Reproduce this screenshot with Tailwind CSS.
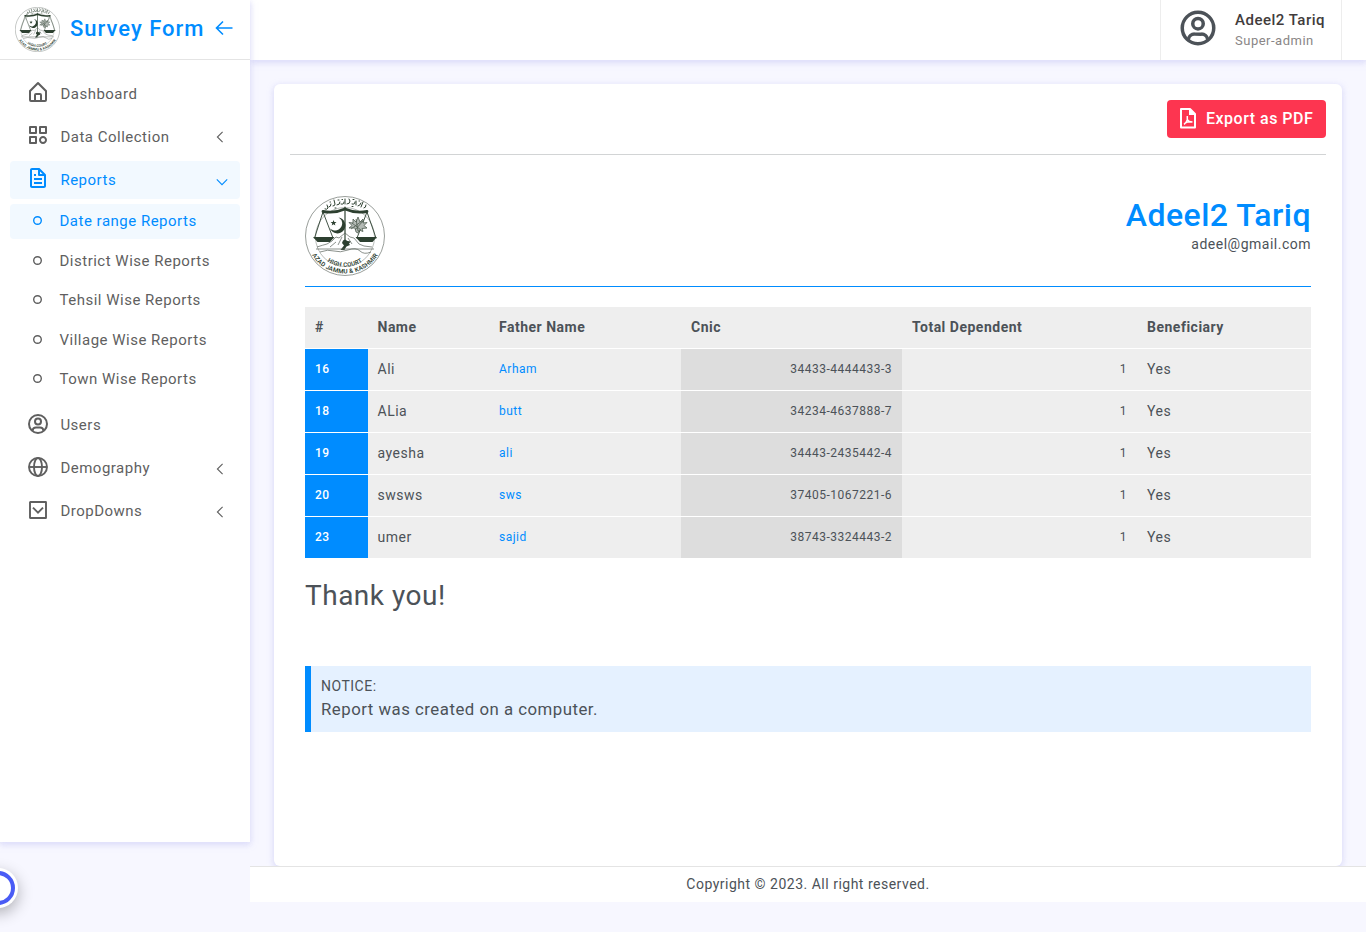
<!DOCTYPE html>
<html lang="en">
<head>
<meta charset="utf-8">
<title>Survey Form</title>
<script src="https://cdn.jsdelivr.net/npm/@tailwindcss/browser@4"></script>
</head>
<body class="relative h-[932px] overflow-hidden bg-[#f7f7ff] font-['Roboto',sans-serif] text-sm tracking-[0.5px] text-[#4c5258]">
<svg width="0" height="0" class="absolute">
  <defs>
    <path id="arc-mid" d="M13 55.500 A31.500 31.500 0 0 0 67 55.500"/>
    <path id="arc-low" d="M7 59 A38.600 38.600 0 0 0 73 59"/>
    <symbol id="emblem" viewBox="0 0 80 80">
      <circle cx="40" cy="40" r="39.500" fill="#fff" stroke="#6d746e" stroke-width=".7"/>
      <circle cx="40" cy="41" r="29.500" fill="none" stroke="#8a908b" stroke-width=".6"/>
      <g fill="none" stroke="#2d4030" stroke-linecap="round">
        <path d="M20 13q2 1 3-1l-1-3M24 11q2 0 2-3M28 10q2 0 2-2l-1-4M32 9q3 0 3-3M36 8q3 1 3-2M40 8v-5M42 8q3 0 3-3l-1-2M47 8q3 1 3-2M51 5v4M53 10q2 0 3-3M58 6l-2 5M59 12q2 0 2-3" stroke-width="1"/>
        <path d="M25 6l.5 0M33 4l1 0M37 3.500l.5 0M48 3.500l1 0M54 5l.5 0M30 12l1 0M47 10.500l1 0" stroke-width="1"/>
        <path d="M18 15.500Q30 17.500 40 13Q50 17.500 62 15.500" stroke-width="2.800"/>
        <path d="M40 11v34" stroke-width="1.200"/>
        <path d="M18 16L9.500 42M18 16l10 26M62 16l-10 26M62 16l9 26" stroke-width=".9"/>
      </g>
      <g fill="#2d4030">
        <path d="M8 41h21.500l-4.500 5h-12.500zM50.500 41h21.500l-4.500 5h-12.500z"/>
        <path d="M33.500 21.500a8 8 0 1 1-8.500 11 7.300 7.300 0 0 0 12-3.500 7 7 0 0 0-3.500-7.500z"/>
        <path d="M28.500 24l.8 2 2.200.1-1.700 1.300.6 2.100-1.900-1.200-1.800 1.200.6-2.100-1.700-1.300 2.200-.1z"/>
        <path d="M38 44.500l2-1 2.500 1.500 3.500.5-2 2 1 1.500-3.500 1.500-2 3 1 .5h-5l1.500-2 2-2.500-2-2.500z"/>
      </g>
      <path d="M51 36l-1-4-6 0 3-2.500-3-3 4 .5 0-4 3 3 2-5 2 5 3-3 0 4 4-.5-3 3 3 2.500-5 .5 1 3-4-1.500-1 3zM46 33l11-8M51 23l2 12M47 27l9 7M58 25l-8 9" fill="#b4bab5" stroke="#4f5d51" stroke-width=".8"/>
      <g fill="none" stroke="#59625a" stroke-width=".7">
        <path d="M12 51q6-2 10-3l5-3 4-4 3 1 6-5 5 4 4 1 5 6 5 2 8 1M11 53h58M15 56q8-3 14-1t14-1 12 1 11 1M25 51l6-5M33 49l4-8M47 48l-4-6"/>
      </g>
      <g fill="#2d4030" font-family="Roboto, sans-serif" font-weight="600" letter-spacing=".2">
        <text font-size="6"><textPath href="#arc-mid" startOffset="50%" text-anchor="middle">HIGH COURT</textPath></text>
        <text font-size="6.200"><textPath href="#arc-low" startOffset="50%" text-anchor="middle">AZAD JAMMU &amp; KASHMIR</textPath></text>
      </g>
    </symbol>
    <symbol id="person" viewBox="0 0 24 24">
      <g fill="none" stroke="currentColor" stroke-width="2">
        <circle cx="12" cy="12" r="9"/><circle cx="12" cy="9.500" r="3"/>
        <path d="M6.500 19v-.5a3.500 3.500 0 0 1 3.500-3h4a3.500 3.500 0 0 1 3.500 3v.5"/>
      </g>
    </symbol>
    <symbol id="chev-left" viewBox="0 0 12 12"><path d="M8.600 .8L3.400 6l5.200 5.200" fill="none" stroke="currentColor" stroke-width="1.100"/></symbol>
  </defs>
</svg>

<div class="flex h-full">
  <aside class="z-10 h-[842px] w-[250px] shrink-0 bg-white shadow-[0_2px_6px_0_rgb(218_218_253/0.65),0_2px_6px_0_rgb(206_206_238/0.54)]">
    <div class="flex h-[60px] items-center border-b border-[#e4e4e4] pl-[15px]">
      <svg class="size-[45px]"><use href="#emblem"/></svg>
      <span class="ml-[10px] -mt-[2px] text-[22px] font-medium leading-none tracking-[1px] text-[#008cff] whitespace-nowrap">Survey Form</span>
      <svg class="ml-[10px] -mt-[3px] h-[16px] w-[18px]" viewBox="0 0 18 16" fill="none" stroke="#008cff" stroke-width="1.600"><path d="M17.500 8H2M8 1.500L1.500 8 8 14.500"/></svg>
    </div>
    <nav class="flex flex-col px-[10px] pt-[15px] text-[15px] text-[#5f5f5f]">
      <a class="mb-[5px] flex h-[38px] items-center pl-4">
        <svg class="size-6 -mt-1" viewBox="0 0 24 24" fill="currentColor"><path d="M5 22h14a2 2 0 0 0 2-2v-9a1 1 0 0 0-.29-.71l-8-8a1 1 0 0 0-1.410 0l-8 8A1 1 0 0 0 3 11v9a2 2 0 0 0 2 2zm5-2v-5h4v5zm-5-8.590 7-7 7 7V20h-3v-5a2 2 0 0 0-2-2h-4a2 2 0 0 0-2 2v5H5z"/></svg>
        <span class="ml-[10.400px] mt-[2px]">Dashboard</span>
      </a>
      <a class="mb-[5px] flex h-[38px] items-center pl-4 pr-[14px]">
        <svg class="size-6 -mt-1" viewBox="0 0 24 24" fill="currentColor"><path d="M10 3H4a1 1 0 0 0-1 1v6a1 1 0 0 0 1 1h6a1 1 0 0 0 1-1V4a1 1 0 0 0-1-1zM9 9H5V5h4v4zm11-6h-6a1 1 0 0 0-1 1v6a1 1 0 0 0 1 1h6a1 1 0 0 0 1-1V4a1 1 0 0 0-1-1zm-1 6h-4V5h4v4zm-9 4H4a1 1 0 0 0-1 1v6a1 1 0 0 0 1 1h6a1 1 0 0 0 1-1v-6a1 1 0 0 0-1-1zm-1 6H5v-4h4v4zm8-6c-2.206 0-4 1.794-4 4s1.794 4 4 4 4-1.794 4-4-1.794-4-4-4zm0 6c-1.103 0-2-.897-2-2s.897-2 2-2 2 .897 2 2-.897 2-2 2z"/></svg>
        <span class="ml-[10.400px] mt-[2px] flex-1">Data Collection</span>
        <svg class="size-3"><use href="#chev-left"/></svg>
      </a>
      <a class="mb-[5px] flex h-[38px] items-center rounded bg-[#f2f9ff] pl-4 pr-[12px] text-[#008cff]">
        <svg class="size-6 -mt-1" viewBox="0 0 24 24" fill="currentColor"><path d="M19.903 8.586a.997.997 0 0 0-.196-.293l-6-6a.997.997 0 0 0-.293-.196c-.03-.014-.062-.022-.094-.033a.991.991 0 0 0-.259-.051C13.040 2.011 13.021 2 13 2H6c-1.103 0-2 .897-2 2v16c0 1.103.897 2 2 2h12c1.103 0 2-.897 2-2V9c0-.021-.011-.04-.013-.062a.952.952 0 0 0-.051-.259c-.01-.032-.019-.063-.033-.093zM16.586 8H14V5.414L16.586 8zM6 20V4h6v5a1 1 0 0 0 1 1h5l.002 10H6z"/><path d="M8 12h8v2H8zm0 4h8v2H8zm0-8h2v2H8z"/></svg>
        <span class="ml-[10.400px] mt-[2px] flex-1">Reports</span>
        <svg class="size-3 mt-[3px]" viewBox="0 0 12 12"><path d="M.8 3.400L6 8.600l5.200-5.200" fill="none" stroke="currentColor" stroke-width="1.100"/></svg>
      </a>
      <div class="mb-[8px] flex flex-col gap-[4.500px]">
        <a class="flex h-[35px] items-center rounded bg-[#f2f9ff] pl-[23px] text-[#008cff]"><svg class="size-[9px] -mt-[2px]" viewBox="0 0 9 9"><circle cx="4.500" cy="4.500" r="3.800" fill="none" stroke="currentColor" stroke-width="1.400"/></svg><span class="ml-[17.500px]">Date range Reports</span></a>
        <a class="flex h-[35px] items-center pl-[23px]"><svg class="size-[9px] -mt-[2px]" viewBox="0 0 9 9"><circle cx="4.500" cy="4.500" r="3.800" fill="none" stroke="currentColor" stroke-width="1.400"/></svg><span class="ml-[17.500px] mt-[1px]">District Wise Reports</span></a>
        <a class="flex h-[35px] items-center pl-[23px]"><svg class="size-[9px] -mt-[2px]" viewBox="0 0 9 9"><circle cx="4.500" cy="4.500" r="3.800" fill="none" stroke="currentColor" stroke-width="1.400"/></svg><span class="ml-[17.500px]">Tehsil Wise Reports</span></a>
        <a class="flex h-[35px] items-center pl-[23px]"><svg class="size-[9px] -mt-[2px]" viewBox="0 0 9 9"><circle cx="4.500" cy="4.500" r="3.800" fill="none" stroke="currentColor" stroke-width="1.400"/></svg><span class="ml-[17.500px] mt-[1px]">Village Wise Reports</span></a>
        <a class="flex h-[35px] items-center pl-[23px]"><svg class="size-[9px] -mt-[2px]" viewBox="0 0 9 9"><circle cx="4.500" cy="4.500" r="3.800" fill="none" stroke="currentColor" stroke-width="1.400"/></svg><span class="ml-[17.500px]">Town Wise Reports</span></a>
      </div>
      <a class="mb-[5px] flex h-[38px] items-center pl-4">
        <svg class="size-6"><use href="#person"/></svg>
        <span class="ml-[10.400px] mt-[3px]">Users</span>
      </a>
      <a class="mb-[5px] flex h-[38px] items-center pl-4 pr-[14px]">
        <svg class="size-6" viewBox="0 0 24 24" fill="none" stroke="currentColor" stroke-width="1.900"><circle cx="12" cy="12" r="9"/><ellipse cx="12" cy="12" rx="4" ry="9"/><path d="M3 12h18"/></svg>
        <span class="ml-[10.400px] mt-[3px] flex-1">Demography</span>
        <svg class="size-3 mt-[3px]"><use href="#chev-left"/></svg>
      </a>
      <a class="mb-[5px] flex h-[38px] items-center pl-4 pr-[14px]">
        <svg class="size-6" viewBox="0 0 24 24" fill="none" stroke="currentColor" stroke-width="1.900"><rect x="4" y="4" width="16" height="16" rx=".3"/><path d="M7 9.700l5 5 5-5"/></svg>
        <span class="ml-[10.400px] mt-[3px] flex-1">DropDowns</span>
        <svg class="size-3 mt-[3px]"><use href="#chev-left"/></svg>
      </a>
    </nav>
  </aside>

  <div class="flex flex-1 flex-col">
    <header class="flex h-[60px] shrink-0 justify-end bg-white pr-6 shadow-[0_2px_6px_0_rgb(218_218_253/0.65),0_2px_6px_0_rgb(206_206_238/0.54)]">
      <div class="flex w-[182px] items-center border-x border-[#ededed] pl-4">
        <svg class="size-[42px] -mt-1"><use href="#person"/></svg>
        <div class="ml-4 whitespace-nowrap">
          <p class="text-[15px] font-medium leading-[21px] text-[#413c3c]">Adeel2 Tariq</p>
          <p class="text-[13px] leading-5 text-[#8a8686]">Super-admin</p>
        </div>
      </div>
    </header>

    <main class="mx-6 mt-6 h-[782px] rounded-md bg-white p-4 shadow-[0_2px_6px_0_rgb(218_218_253/0.65),0_2px_6px_0_rgb(206_206_238/0.54)]">
      <div class="flex justify-end border-b border-[#d2d4d5] pb-4">
        <button class="flex h-[38px] w-[159px] items-center rounded bg-[#fd3550] pl-3 text-base font-medium text-white whitespace-nowrap">
          <svg class="h-[22px] w-[18px] -mt-[2px]" viewBox="0 0 18 22" fill="none" stroke="#fff" stroke-width="2"><path d="M2 2h9l5 5v13.500h-14z" stroke-linejoin="round"/><path d="M11 2v5h5" fill="#fff"/><path d="M8.300 9v3.500q1.200 2.500 5 2.500M8.500 12.500q-1 3-3.500 4.800M6 16q3-1.500 7.500-1" stroke-width="1.500"/></svg>
          <span class="ml-[9px]">Export as PDF</span>
        </button>
      </div>
      <section class="px-[15px] pt-[41px]">
        <div class="flex h-[91px] justify-between border-b border-[#008cff]">
          <svg class="size-20"><use href="#emblem"/></svg>
          <div class="text-right">
            <h2 class="text-[32px] font-medium leading-[38px] text-[#008cff]">Adeel2 Tariq</h2>
            <p class="leading-[21px]">adeel@gmail.com</p>
          </div>
        </div>
        <table class="mt-5 w-full table-fixed border-separate border-spacing-0 text-left [&_th]:border-b [&_th]:border-white [&_th]:pb-[2px] [&_td]:border-b [&_td]:border-white [&_td]:pb-[2px]">
          <colgroup><col class="w-[63px]"><col class="w-[121px]"><col class="w-[192px]"><col class="w-[221px]"><col class="w-[235px]"><col class="w-[174px]"></colgroup>
          <thead>
            <tr class="h-[42px] bg-[#eee] font-bold"><th class="px-[10px]">#</th><th class="px-[9.500px]">Name</th><th class="px-[10px]">Father Name</th><th class="px-[10px]">Cnic</th><th class="px-[10px]">Total Dependent</th><th class="px-[10px]">Beneficiary</th></tr>
          </thead>
          <tbody>
            <tr class="h-[42px] bg-[#eee]"><td class="bg-[#008cff] px-[10px] text-xs font-medium text-white">16</td><td class="px-[9.500px]">Ali</td><td class="px-[10px] text-xs text-[#008cff]">Arham</td><td class="bg-[#ddd] px-[10px] text-right text-xs">34433-4444433-3</td><td class="px-[10px] text-right text-xs">1</td><td class="px-[10px]">Yes</td></tr>
            <tr class="h-[42px] bg-[#eee]"><td class="bg-[#008cff] px-[10px] text-xs font-medium text-white">18</td><td class="px-[9.500px]">ALia</td><td class="px-[10px] text-xs text-[#008cff]">butt</td><td class="bg-[#ddd] px-[10px] text-right text-xs">34234-4637888-7</td><td class="px-[10px] text-right text-xs">1</td><td class="px-[10px]">Yes</td></tr>
            <tr class="h-[42px] bg-[#eee]"><td class="bg-[#008cff] px-[10px] text-xs font-medium text-white">19</td><td class="px-[9.500px]">ayesha</td><td class="px-[10px] text-xs text-[#008cff]">ali</td><td class="bg-[#ddd] px-[10px] text-right text-xs">34443-2435442-4</td><td class="px-[10px] text-right text-xs">1</td><td class="px-[10px]">Yes</td></tr>
            <tr class="h-[42px] bg-[#eee]"><td class="bg-[#008cff] px-[10px] text-xs font-medium text-white">20</td><td class="px-[9.500px]">swsws</td><td class="px-[10px] text-xs text-[#008cff]">sws</td><td class="bg-[#ddd] px-[10px] text-right text-xs">37405-1067221-6</td><td class="px-[10px] text-right text-xs">1</td><td class="px-[10px]">Yes</td></tr>
            <tr class="h-[42px] bg-[#eee]"><td class="bg-[#008cff] px-[10px] text-xs font-medium text-white">23</td><td class="px-[9.500px]">umer</td><td class="px-[10px] text-xs text-[#008cff]">sajid</td><td class="bg-[#ddd] px-[10px] text-right text-xs">38743-3324443-2</td><td class="px-[10px] text-right text-xs">1</td><td class="px-[10px]">Yes</td></tr>
          </tbody>
        </table>
        <p class="mt-4 text-[28px] leading-[42px]">Thank you!</p>
        <div class="mt-[49px] h-[66px] border-l-[6px] border-[#008cff] bg-[#e5f1ff] px-[10px] pt-[10px]">
          <p class="leading-[21px]">NOTICE:</p>
          <p class="text-[16.800px] leading-[25px]">Report was created on a computer.</p>
        </div>
      </section>
    </main>
    <footer class="z-10 flex h-[36px] items-center justify-center border-t border-[#e4e4e4] bg-white pb-[2px]">Copyright © 2023. All right reserved.</footer>
  </div>
</div>

<div class="absolute -left-[22px] top-[868px] z-20 size-10 rounded-full bg-white p-[3px] shadow-[0_5px_15px_rgb(0_0_0/0.3)]">
  <div class="size-full rounded-full border-4 border-[#4a5cf5]"></div>
</div>
</body>
</html>
